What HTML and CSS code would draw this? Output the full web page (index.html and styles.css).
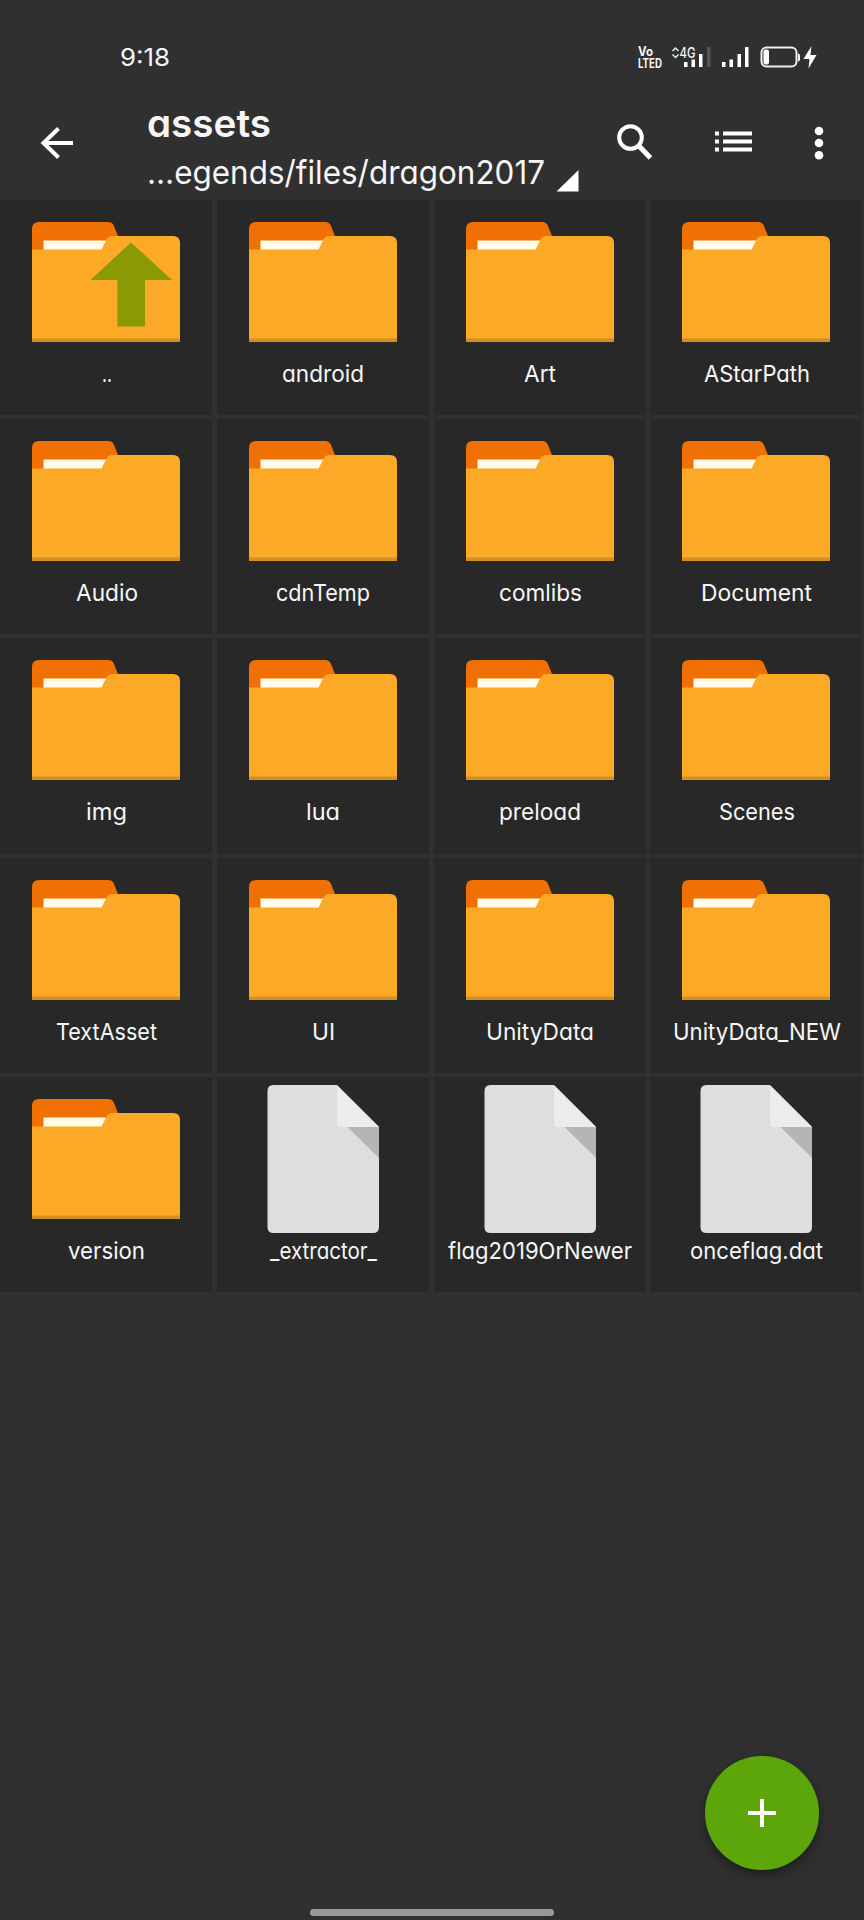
FILE: index.html
```
<!DOCTYPE html>
<html lang="en">
<head>
<meta charset="utf-8">
<title>assets</title>
<link rel="stylesheet" href="styles.css">
</head>
<body>
<svg class="defs" width="0" height="0">
  <symbol id="folder" viewBox="0 0 148 148">
    <path fill="#f07003" d="M0 50V21q0-7 7-7h69q4.500 0 6 4l4 10v22z"/>
    <path fill="#fffbe8" d="M11.500 32.500H76v14H11.500z"/>
    <path fill="#fda928" d="M0 41.500h69.500l5-10q1.500-3.500 6-3.500H141q7 0 7 7v99H0z"/>
    <path fill="#d09022" d="M0 130.500h148v3.500H0z"/>
  </symbol>
  <symbol id="folder-up" viewBox="0 0 148 148">
    <use href="#folder" width="148" height="148"/>
    <path fill="#8a9a05" d="M99 34.500 140 72h-27v46.500H85.500V72H58.500z"/>
  </symbol>
  <symbol id="file" viewBox="0 0 148 148">
    <path fill="#dedede" d="M18.500 6q0-6 6-6h63L130 42v100q0 6-6 6H24.500q-6 0-6-6z"/>
    <path fill="#b5b5b5" d="M98 41.500h32V73z"/>
    <path fill="#ececec" d="M88 0l42 42H92q-4 0-4-4z"/>
  </symbol>
</svg>

<div class="status">
  <svg class="clock" width="60" height="30"><text x="-1" y="24" textLength="50" lengthAdjust="spacingAndGlyphs">9:18</text></svg>
  <svg class="tray" width="184" height="30" viewBox="636 42 184 30">
    <g class="volte">
      <text x="638" y="56" textLength="15" lengthAdjust="spacingAndGlyphs">Vo</text>
      <text x="638" y="67.500" textLength="24" lengthAdjust="spacingAndGlyphs">LTED</text>
    </g>
    <path fill="none" stroke="#eee" stroke-width="1.500" d="M672.500 51l3-3 3 3M672.500 54.500l3 3 3-3"/>
    <text class="net" x="679.500" y="57.500" textLength="16" lengthAdjust="spacingAndGlyphs">4G</text>
    <path fill="#fff" d="M684 62h3.500v5H684zM691.500 59.500h3.500V67h-3.500zM699 54h3.500v13H699zM722 62h3.500v5H722zM729.500 59.500h3.500V67h-3.500zM737.500 54h3.500v13h-3.500zM745 47h3.500v20H745z"/>
    <path fill="#555" d="M707 47h3.500v20H707z"/>
    <rect x="761.500" y="47.500" width="35" height="19" rx="5" fill="none" stroke="#eee" stroke-width="2"/>
    <rect x="763.500" y="49.500" width="5.500" height="15" rx="2" fill="#fff"/>
    <path fill="#eee" d="M798 53.500q2 0 2 2v4q0 2-2 2z"/>
    <path fill="#fff" d="M811.500 46 803.500 59h6l-1 9.500 8-13.500h-6z"/>
  </svg>
</div>

<header class="bar">
  <svg class="back" width="34" height="34" viewBox="0 0 34 34"><path d="M33 17H3M18.500 2.500 3.500 17l15 14.500" fill="none" stroke="#fff" stroke-width="4"/></svg>
  <div class="titles">
    <svg class="title" width="440" height="40"><text x="-1" y="34.500" textLength="124" lengthAdjust="spacingAndGlyphs">assets</text></svg>
    <svg class="path" width="440" height="50">
      <text x="-1" y="34" textLength="398" lengthAdjust="spacingAndGlyphs">…egends/files/dragon2017</text>
      <path fill="#fff" d="M430.500 20V41.500h-22z"/>
    </svg>
  </div>
  <svg class="search" width="36" height="36" viewBox="0 0 36 36"><circle cx="13.500" cy="13.500" r="11.300" fill="none" stroke="#fff" stroke-width="4"/><path d="M21.500 21.500 33.500 34" stroke="#fff" stroke-width="5"/></svg>
  <svg class="list" width="38" height="22" viewBox="0 0 38 22"><path fill="#fff" d="M0 .5h4v4H0zM8 .5h29v4H8zM0 8.500h4v4H0zM8 8.500h29v4H8zM0 16.500h4v4H0zM8 16.500h29v4H8z"/></svg>
  <svg class="more" width="10" height="34" viewBox="0 0 10 34"><g fill="#fff"><circle cx="5" cy="5" r="4.300"/><circle cx="5" cy="17" r="4.300"/><circle cx="5" cy="29.300" r="4.300"/></g></svg>
</header>

<main class="grid" id="grid"></main>

<button class="fab" aria-label="Add"><svg width="30" height="30" viewBox="0 0 30 30"><path d="M15 1v28M1 15h28" stroke="#fff" stroke-width="4"/></svg></button>
<div class="handle"></div>
<script src="app.js"></script>
</body>
</html>
```
FILE: styles.css
```
* { box-sizing: border-box; }
body {
  margin: 0;
  width: 864px;
  height: 1920px;
  overflow: hidden;
  position: relative;
  background: #303030;
  color: #fff;
  font-family: Inter, "Noto Sans", sans-serif;
  font-feature-settings: "cv11" 1;
}
svg { display: block; flex: none; overflow: visible; }
text { fill: #f6f6f6; }
.defs { position: absolute; }
.status {
  height: 84px;
  padding: 42px 44px 0 121px;
  display: flex;
  justify-content: space-between;
}
.clock text { font-size: 24.5px; }
.volte text { font-size: 12.5px; font-weight: 700; }
.net { font-size: 14px; font-weight: 500; }
.bar {
  height: 116px;
  display: flex;
  align-items: flex-start;
}
.back { margin: 42px 0 0 40px; }
.titles { margin: 18px 0 0 74px; width: 467px; }
.title text { font-size: 39px; font-weight: 600; }
.path { margin-top: 8px; }
.path text { font-size: 32.5px; font-weight: 400; }
.search { margin: 40px 0 0 2px; }
.list { margin: 47px 0 0 62px; }
.more { margin: 42px 0 0 61px; }
.grid {
  display: grid;
  grid-template-columns: repeat(4, 212px);
  grid-auto-rows: 215.2px;
  gap: 4px 4.8px;
}
.cell {
  background: #282828;
  display: flex;
  flex-direction: column;
  align-items: center;
  padding-top: 8px;
}
.label { margin: -2px 0 0 1px; }
.label text { font-size: 23.5px; font-weight: 400; }
.fab {
  position: absolute;
  left: 705px;
  top: 1756px;
  width: 114px;
  height: 114px;
  border: 0;
  padding: 0;
  border-radius: 50%;
  background: #5ca60a;
  box-shadow: 0 5px 12px rgba(0, 0, 0, .4);
  display: flex;
  align-items: center;
  justify-content: center;
}
.handle {
  position: absolute;
  left: 310px;
  top: 1909px;
  width: 244px;
  height: 7px;
  border-radius: 4px;
  background: #9b999b;
}
```
FILE: app.js
```
// name, label width in px, icon
const items = [
  ["..", 10, "folder-up"], ["android", 82, "folder"], ["Art", 32, "folder"], ["AStarPath", 106, "folder"],
  ["Audio", 62, "folder"], ["cdnTemp", 94, "folder"], ["comlibs", 83, "folder"], ["Document", 111, "folder"],
  ["img", 41, "folder"], ["lua", 34, "folder"], ["preload", 82, "folder"], ["Scenes", 76, "folder"],
  ["TextAsset", 101, "folder"], ["UI", 23, "folder"], ["UnityData", 108, "folder"], ["UnityData_NEW", 168, "folder"],
  ["version", 77, "folder"], ["_extractor_", 107, "file"], ["flag2019OrNewer", 184, "file"], ["onceflag.dat", 133, "file"]
];
document.getElementById("grid").innerHTML = items.map(([name, width, icon]) => `
  <div class="cell">
    <svg width="148" height="148"><use href="#${icon}" width="148" height="148"/></svg>
    <svg class="label" width="${width}" height="34"><text x="0" y="28" textLength="${width}" lengthAdjust="spacingAndGlyphs">${name}</text></svg>
  </div>`).join("");
```
